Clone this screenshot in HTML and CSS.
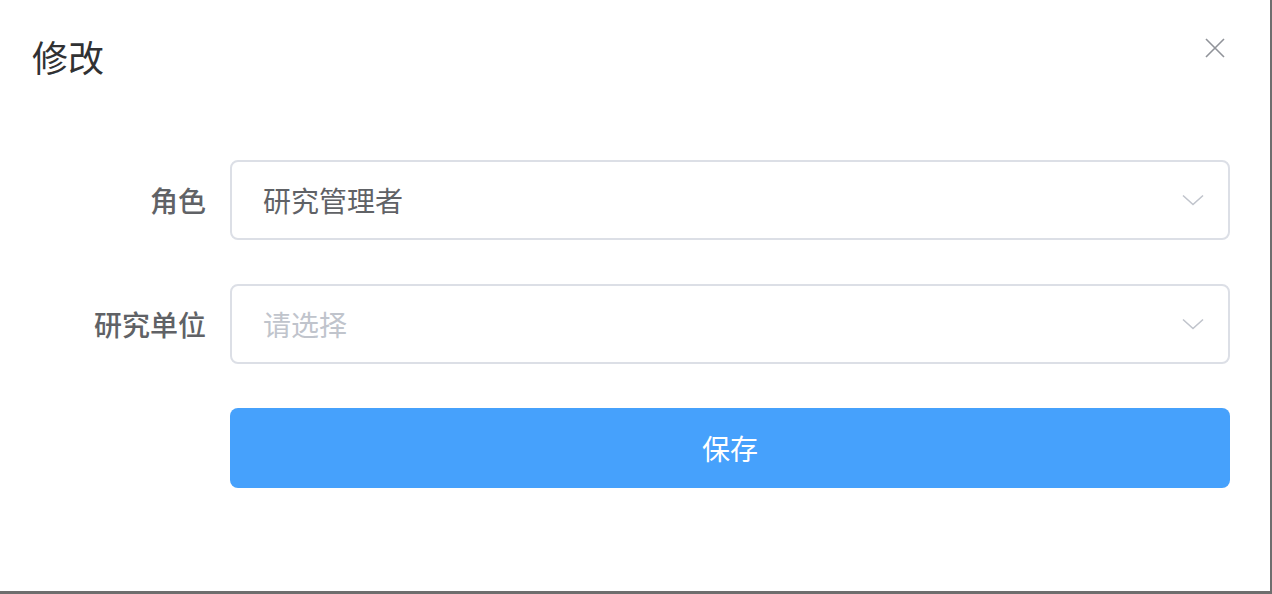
FILE: index.html
```html
<!DOCTYPE html>
<html lang="zh">
<head>
<meta charset="utf-8">
<link rel="stylesheet" href="styles.css">
</head>
<body>
<div class="dialog">
  <div class="header">
    <span class="title">修改</span>
    <button class="close" aria-label="close">
      <svg width="20" height="20" viewBox="0 0 20 20"><path d="M1 1L19 19M19 1L1 19" stroke="#909399" stroke-width="1.6" fill="none"/></svg>
    </button>
  </div>
  <div class="body">
    <div class="row">
      <label class="label">角色</label>
      <div class="select">
        <span class="value">研究管理者</span>
        <svg class="arrow" width="22" height="12" viewBox="0 0 22 12"><path d="M1 1.5L11 10.5L21 1.5" stroke="#c0c4cc" stroke-width="1.6" fill="none"/></svg>
      </div>
    </div>
    <div class="row">
      <label class="label">研究单位</label>
      <div class="select">
        <span class="placeholder">请选择</span>
        <svg class="arrow" width="22" height="12" viewBox="0 0 22 12"><path d="M1 1.5L11 10.5L21 1.5" stroke="#c0c4cc" stroke-width="1.6" fill="none"/></svg>
      </div>
    </div>
    <div class="row">
      <span class="label"></span>
      <button class="save">保存</button>
    </div>
  </div>
</div>
</body>
</html>
```
FILE: styles.css
```css
html, body {
  margin: 0;
  padding: 0;
  background: #6e6e6e;
  width: 1272px;
  height: 594px;
  overflow: hidden;
  font-family: "Noto Sans CJK SC", "Noto Sans", sans-serif;
}
.dialog {
  width: 1270px;
  height: 591px;
  background: #fff;
  box-sizing: border-box;
  padding: 0 40px 0 30px;
}
.header {
  display: flex;
  justify-content: space-between;
  align-items: center;
  height: 114px;
  padding-left: 2px;
}
.title {
  font-size: 36px;
  color: #303133;
  line-height: 48px;
  margin-top: -3px;
}
.close {
  border: none;
  background: none;
  padding: 0;
  width: 20px;
  height: 20px;
  margin-right: 5px;
  margin-top: -18px;
  display: flex;
}
.body {
  padding-top: 46px;
}
.row {
  display: flex;
  align-items: center;
  margin-bottom: 44px;
}
.label {
  width: 200px;
  flex: none;
  box-sizing: border-box;
  padding-right: 24px;
  text-align: right;
  font-size: 28px;
  font-weight: 500;
  color: #606266;
}
.select {
  flex: 1;
  height: 80px;
  box-sizing: border-box;
  border: 2px solid #dcdfe6;
  border-radius: 8px;
  display: flex;
  align-items: center;
  justify-content: space-between;
  padding: 0 24px 0 31px;
  font-size: 28px;
}
.value { color: #606266; }
.placeholder { color: #c0c4cc; }
.arrow { display: block; }
.save {
  flex: 1;
  height: 80px;
  border: none;
  border-radius: 8px;
  background: #46a1fc;
  color: #fff;
  font-size: 28px;
  font-family: "Noto Sans CJK SC", "Noto Sans", sans-serif;
  padding: 0;
}
```
